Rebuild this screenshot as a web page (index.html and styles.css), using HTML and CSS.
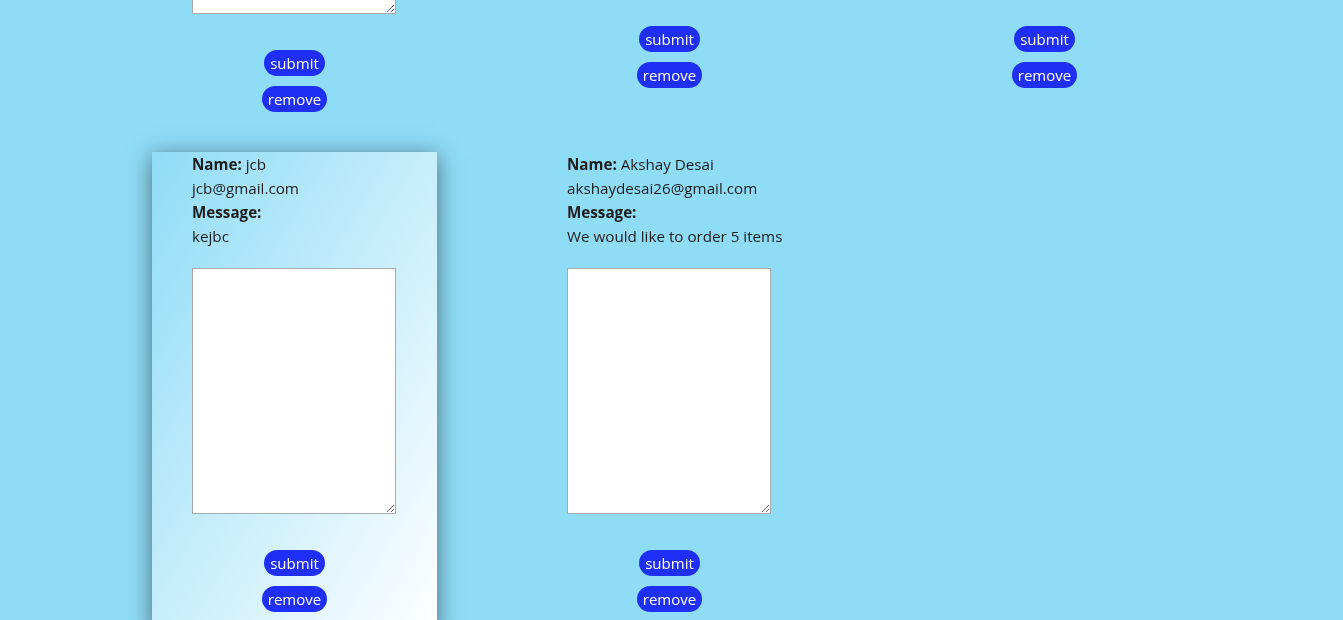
FILE: index.html
```html
<!DOCTYPE html>
<html lang="en">
<head>
<meta charset="utf-8">
<title>Messages</title>
<link rel="stylesheet" href="styles.css">
</head>
<body>
<main class="board">
  <section class="card">
    <textarea class="reply reply-tail"></textarea>
    <div class="actions">
      <button class="btn">submit</button>
      <button class="btn">remove</button>
    </div>
  </section>
  <section class="card card-short">
    <div class="actions">
      <button class="btn">submit</button>
      <button class="btn">remove</button>
    </div>
  </section>
  <section class="card card-short">
    <div class="actions">
      <button class="btn">submit</button>
      <button class="btn">remove</button>
    </div>
  </section>

  <section class="card card-active">
    <div class="info">
      <div><b>Name:</b> jcb</div>
      <div>jcb@gmail.com</div>
      <div><b>Message:</b></div>
      <div>kejbc</div>
    </div>
    <textarea class="reply"></textarea>
    <div class="actions">
      <button class="btn">submit</button>
      <button class="btn">remove</button>
    </div>
  </section>
  <section class="card">
    <div class="info">
      <div><b>Name:</b> Akshay Desai</div>
      <div>akshaydesai26@gmail.com</div>
      <div><b>Message:</b></div>
      <div>We would like to order 5 items</div>
    </div>
    <textarea class="reply"></textarea>
    <div class="actions">
      <button class="btn">submit</button>
      <button class="btn">remove</button>
    </div>
  </section>
</main>
</body>
</html>
```

FILE: styles.css
```css
html, body {
  margin: 0;
  padding: 0;
  background: #8fdcf7;
  overflow: hidden;
}

body {
  font-family: "Open Sans", "Noto Sans", sans-serif;
  font-size: 15.2px;
  line-height: 24px;
  color: #1c1c1c;
}

.board {
  display: grid;
  grid-template-columns: repeat(3, 285px);
  column-gap: 90px;
  row-gap: 20px;
  align-items: start;
  padding-left: 152px;
}

.card {
  display: flex;
  flex-direction: column;
  padding: 0 40px 20px;
  box-sizing: border-box;
}

.card-short {
  padding-top: 26px;
}

.card-active {
  background: linear-gradient(to bottom right, #8fdcf7, #ffffff);
  box-shadow: 0 4px 22px rgba(0, 0, 0, 0.5);
}

.info {
  white-space: nowrap;
}

.info b {
  font-weight: 700;
}

.reply {
  display: block;
  width: 204px;
  height: 246px;
  margin: 20px 0 0;
  box-sizing: border-box;
  border: 1px solid #a9a9a9;
  background: #fff;
  padding: 2px;
}

.reply-tail {
  margin-top: 0;
  height: 14px;
  border-top: 0;
}

.actions {
  display: flex;
  flex-direction: column;
  align-items: center;
  gap: 10px;
  margin-top: 36px;
}

.card-short .actions {
  margin-top: 0;
}

.btn {
  font-family: "Open Sans", "Noto Sans", sans-serif;
  font-size: 15px;
  line-height: 26px;
  height: 26px;
  padding: 0 6px;
  border: 0;
  border-radius: 13px;
  background: #1f2ff5;
  color: #fff;
  cursor: pointer;
}
```
